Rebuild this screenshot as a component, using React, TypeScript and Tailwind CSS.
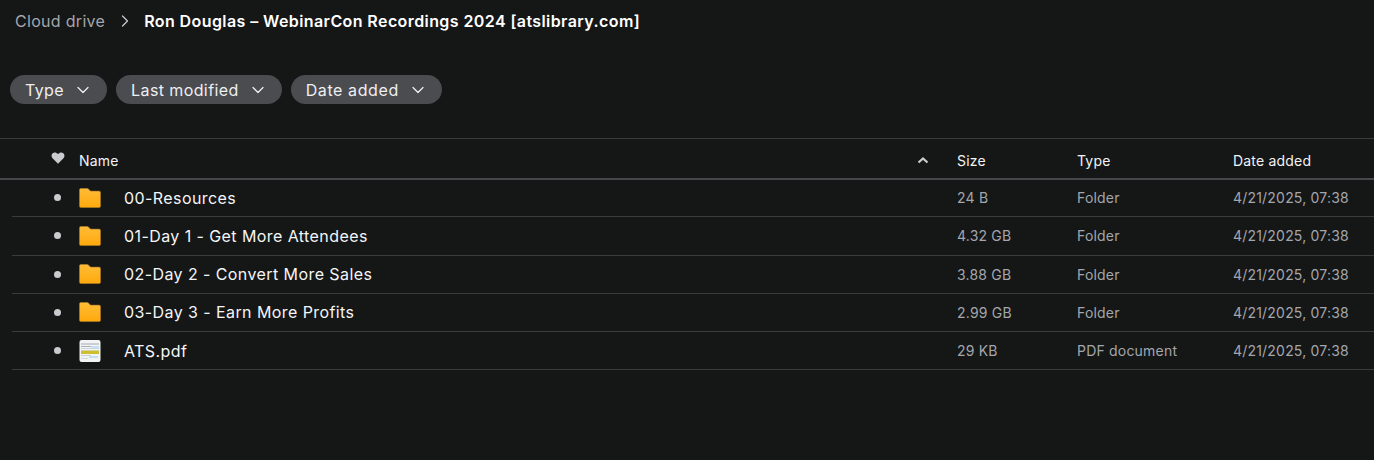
import React from "react";
import { ChevronDown, ChevronRight } from "lucide-react";

const rows = [
  { name: "00-Resources", size: "24 B", type: "Folder", folder: true },
  { name: "01-Day 1 - Get More Attendees", size: "4.32 GB", type: "Folder", folder: true },
  { name: "02-Day 2 - Convert More Sales", size: "3.88 GB", type: "Folder", folder: true },
  { name: "03-Day 3 - Earn More Profits", size: "2.99 GB", type: "Folder", folder: true },
  { name: "ATS.pdf", size: "29 KB", type: "PDF document", folder: false },
];

function FolderIcon() {
  return (
    <svg width="22" height="20" viewBox="0 0 22 20" className="block">
      <defs>
        <linearGradient id="fg" x1="0" y1="0" x2="0" y2="1">
          <stop offset="0" stopColor="#ffbc38" />
          <stop offset="1" stopColor="#ffa90c" />
        </linearGradient>
      </defs>
      <path
        d="M.3 2C.3 1 1.100.3 2 .3h6c.5 0 1 .2 1.300.5l2.200 2.200H20c1 0 1.700.8 1.700 1.700V18c0 1-.8 1.700-1.700 1.700H2c-1 0-1.700-.8-1.700-1.700Z"
        fill="url(#fg)"
        stroke="#80602a"
        strokeWidth="0.6"
      />
    </svg>
  );
}

function PdfThumb() {
  return (
    <svg width="22" height="22" viewBox="0 0 22 22" className="block">
      <rect x="0.500" y="0" width="21" height="22" rx="2" fill="#f1f3f4" />
      <rect x="2" y="3" width="18" height="2" fill="#c9cfd4" />
      <rect x="2" y="6" width="10" height="1" fill="#aab2b9" />
      <rect x="12" y="6" width="8" height="2" fill="#c4e0f0" />
      <rect x="2" y="8" width="18" height="1" fill="#cfd5da" />
      <rect x="2" y="10" width="18" height="1" fill="#cfd6a0" />
      <rect x="2" y="11" width="18" height="3" fill="#cdbf2e" />
      <rect x="2" y="15" width="10" height="1" fill="#ccd2d7" />
      <rect x="10" y="16" width="9" height="2" fill="#c4e0f0" />
      <rect x="2" y="18" width="7" height="1" fill="#d5dadf" />
    </svg>
  );
}

function Chip({ label, wide }: { label: string; wide?: boolean }) {
  return (
    <button
      className={`flex h-[29px] items-center gap-[9px] rounded-full bg-[#4b4c50] pl-[15px] pr-[14px] text-base leading-none text-[#eeeff0] ${
        wide ? "tracking-[0.6px]" : "tracking-[0.4px]"
      }`}
    >
      <span>{label}</span>
      <ChevronDown size={20} strokeWidth={1.5} />
    </button>
  );
}

export default function App() {
  return (
    <div
      className="h-[460px] w-[1374px] overflow-hidden bg-[#151616]"
      style={{ fontFamily: "Inter, 'Liberation Sans', sans-serif" }}
    >
      <div className="flex h-[41px] items-center pl-[15px]">
        <span className="text-base tracking-[0.3px] text-[#a3a6ad]">Cloud drive</span>
        <ChevronRight size={20} strokeWidth={1.5} className="mx-[9.5px] text-[#c8cacd]" />
        <span className="text-base font-semibold tracking-[0.41px] text-white">
          Ron Douglas – WebinarCon Recordings 2024 [atslibrary.com]
        </span>
      </div>

      <div className="mt-[34px] flex gap-[9px] pl-[10px]">
        <Chip label="Type" />
        <Chip label="Last modified" />
        <Chip label="Date added" wide />
      </div>

      <div className="mt-[34px] grid h-[42px] grid-cols-[79px_878px_120px_156px_1fr] items-center border-y border-t-[#3a3b3d] border-b-2 border-b-[#46474a] text-sm tracking-[0.2px] text-[#f2f3f4]">
        <div className="flex justify-end pr-[14px]">
          <svg width="14" height="14" viewBox="0 0 24 24" fill="#c9cbce" className="-mt-[1px]">
            <path d="M12 22 2.600 12.300C.2 9.700.4 6 2.900 3.800 5.500 1.700 9.300 2.200 12 5.200c2.700-3 6.500-3.500 9.100-1.400 2.500 2.200 2.700 5.900.3 8.500Z" />
          </svg>
        </div>
        <div className="flex items-center justify-between pr-[28px] pt-[5px]">
          <span>Name</span>
          <svg width="12" height="12" viewBox="0 0 12 12" fill="none" stroke="#c9cbce" strokeWidth="2.200" className="-mt-[2px]">
            <path d="M1.500 8.500l4.500-4 4.500 4" />
          </svg>
        </div>
        <span className="pt-[5px]">Size</span>
        <span className="pt-[5px]">Type</span>
        <span className="pt-[5px]">Date added</span>
      </div>

      <div className="-mt-px ml-3">
        {rows.map((r) => (
          <div
            key={r.name}
            className="grid h-[38.25px] grid-cols-[112px_833px_120px_156px_1fr] items-center border-b border-[#3a3b3d] text-sm tracking-[0.2px] text-[#a3a6ad]"
          >
            <div className="flex items-center pl-[42px]">
              <span className="h-[7px] w-[7px] rounded-full bg-[#c9cbce]" />
              <span className="ml-[18px] flex w-[22px] justify-center">
                {r.folder ? <FolderIcon /> : <PdfThumb />}
              </span>
            </div>
            <span className="text-base leading-none tracking-[0.42px] text-[#f4f5f6]">{r.name}</span>
            <span className="pt-px">{r.size}</span>
            <span className="pt-px">{r.type}</span>
            <span className="pt-px">4/21/2025, 07:38</span>
          </div>
        ))}
      </div>
    </div>
  );
}
